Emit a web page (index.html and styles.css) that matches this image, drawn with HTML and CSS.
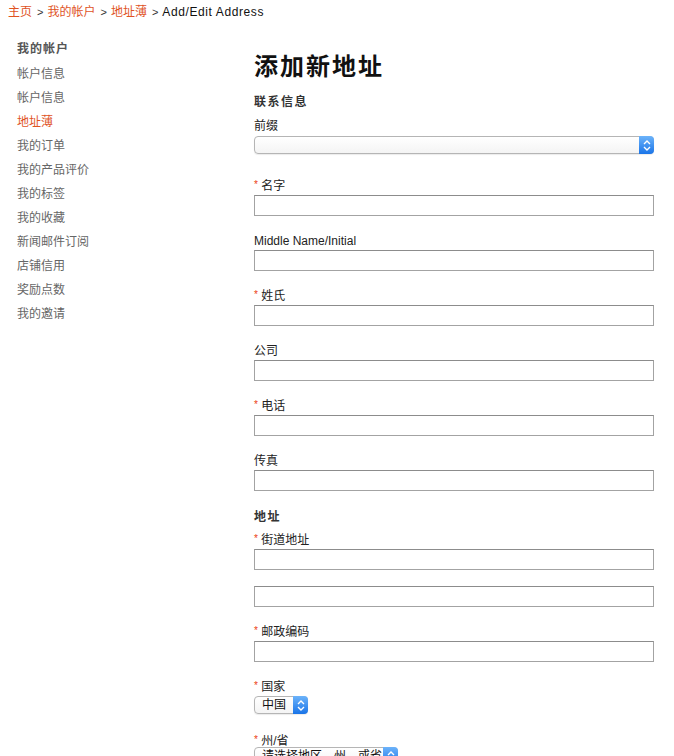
FILE: index.html
```html
<!DOCTYPE html>
<html>
<head>
    <meta charset="UTF-8">
    <link rel="stylesheet" href="styles.css">
</head>
<body>
    <div class="breadcrumbs">
        <a href="#">主页</a><span class="sep">&gt;</span><a href="#">我的帐户</a><span class="sep">&gt;</span><a href="#">地址薄</a><span class="sep">&gt;</span><strong>Add/Edit Address</strong>
    </div>

    <div class="page">
        <div class="sidebar">
            <div class="sidebar-title">我的帐户</div>
            <ul class="nav">
                <li><a href="#">帐户信息</a></li>
                <li><a href="#">帐户信息</a></li>
                <li class="active"><a href="#">地址薄</a></li>
                <li><a href="#">我的订单</a></li>
                <li><a href="#">我的产品评价</a></li>
                <li><a href="#">我的标签</a></li>
                <li><a href="#">我的收藏</a></li>
                <li><a href="#">新闻邮件订阅</a></li>
                <li><a href="#">店铺信用</a></li>
                <li><a href="#">奖励点数</a></li>
                <li><a href="#">我的邀请</a></li>
            </ul>
        </div>

        <div class="main">
            <h1>添加新地址</h1>
            <form action="#" method="post">
                <h2>联系信息</h2>
                <div class="form-group select-group">
                    <label for="prefix" class="first">前缀</label>
                    <div class="select-wrap wide">
                        <select id="prefix" name="prefix"><option></option></select>
                        <span class="select-arrow"><svg width="8" height="11" viewBox="0 0 8 11"><path d="M1 4 L4 1 L7 4 M1 7 L4 10 L7 7" fill="none" stroke="#fff" stroke-width="1.4"/></svg></span>
                    </div>
                </div>
                <div class="form-group">
                    <label for="firstname"><em>*</em> 名字</label>
                    <input type="text" id="firstname" name="firstname">
                </div>
                <div class="form-group">
                    <label for="middlename">Middle Name/Initial</label>
                    <input type="text" id="middlename" name="middlename">
                </div>
                <div class="form-group">
                    <label for="lastname"><em>*</em> 姓氏</label>
                    <input type="text" id="lastname" name="lastname">
                </div>
                <div class="form-group">
                    <label for="company">公司</label>
                    <input type="text" id="company" name="company">
                </div>
                <div class="form-group">
                    <label for="telephone"><em>*</em> 电话</label>
                    <input type="text" id="telephone" name="telephone">
                </div>
                <div class="form-group">
                    <label for="fax">传真</label>
                    <input type="text" id="fax" name="fax">
                </div>

                <h2 class="section">地址</h2>
                <div class="form-group">
                    <label for="street1"><em>*</em> 街道地址</label>
                    <input type="text" id="street1" name="street1">
                    <input type="text" id="street2" name="street2" class="second">
                </div>
                <div class="form-group">
                    <label for="zip"><em>*</em> 邮政编码</label>
                    <input type="text" id="zip" name="zip">
                </div>
                <div class="form-group select-group country-group">
                    <label for="country"><em>*</em> 国家</label>
                    <div class="select-wrap country">
                        <select id="country" name="country"><option>中国</option></select>
                        <span class="select-arrow"><svg width="8" height="11" viewBox="0 0 8 11"><path d="M1 4 L4 1 L7 4 M1 7 L4 10 L7 7" fill="none" stroke="#fff" stroke-width="1.4"/></svg></span>
                    </div>
                </div>
                <div class="form-group select-group region-group">
                    <label for="region"><em>*</em> 州/省</label>
                    <div class="select-wrap region">
                        <select id="region" name="region"><option>请选择地区、州，或省</option></select>
                        <span class="select-arrow"><svg width="8" height="11" viewBox="0 0 8 11"><path d="M1 4 L4 1 L7 4 M1 7 L4 10 L7 7" fill="none" stroke="#fff" stroke-width="1.4"/></svg></span>
                    </div>
                </div>
            </form>
        </div>
    </div>
</body>
</html>
```

FILE: styles.css
```css
* {
    box-sizing: border-box;
}

body {
    margin: 0;
    font-family: "Liberation Sans", "Noto Sans CJK SC", sans-serif;
    font-size: 12px;
    color: #333;
    background-color: #fff;
}

a {
    text-decoration: none;
}

.breadcrumbs {
    padding: 2px 8px 0;
    height: 22px;
    line-height: 20px;
    font-size: 12px;
}

.breadcrumbs a {
    color: #e0531f;
}

.breadcrumbs .sep {
    margin: 0 4px 0 5px;
    color: #333;
    font-size: 11px;
}

.breadcrumbs strong {
    font-weight: normal;
    color: #111;
    letter-spacing: 0.6px;
}

.page {
    display: flex;
    padding-top: 15px;
}

.sidebar {
    width: 254px;
    padding-left: 17px;
}

.sidebar-title {
    height: 25px;
    line-height: 24px;
    font-weight: bold;
    color: #555;
    letter-spacing: 1px;
}

.nav {
    list-style: none;
    margin: 0;
    padding: 0;
}

.nav li {
    height: 24px;
    line-height: 24px;
}

.nav a {
    color: #666;
}

.nav li.active a {
    color: #e0531f;
}

.main {
    width: 400px;
    padding-top: 15px;
}

h1 {
    margin: 0 0 10px;
    height: 30px;
    font-size: 24px;
    line-height: 30px;
    letter-spacing: 2px;
    color: #111;
}

h2 {
    margin: 0 0 4px;
    height: 20px;
    font-size: 12px;
    line-height: 20px;
    letter-spacing: 1.5px;
    color: #333;
}

h2.section {
    margin-top: 16px;
    margin-bottom: 2px;
}

.form-group {
    margin-bottom: 14px;
}

.select-group {
    margin-bottom: 21px;
}

.country-group {
    margin-bottom: 18px;
}

label {
    display: block;
    height: 20px;
    line-height: 22px;
    color: #222;
}

label.first {
    line-height: 20px;
}

.region-group label {
    height: 15px;
    line-height: 18px;
}

label em {
    position: relative;
    top: -2px;
    color: #eb3c10;
    font-style: normal;
    font-size: 10px;
    line-height: 10px;
}

input[type="text"] {
    display: block;
    width: 400px;
    height: 21px;
    margin: 0;
    border: 1px solid #a3a3a3;
    border-top-color: #8c8c8c;
    background: #fff;
    font-size: 12px;
}

input.second {
    margin-top: 16px;
}

.select-wrap {
    position: relative;
    height: 18px;
}

.select-wrap.wide {
    width: 400px;
}

.select-wrap.country {
    width: 54px;
}

.select-wrap.region {
    width: 144px;
}

.select-wrap select {
    -webkit-appearance: none;
    appearance: none;
    display: block;
    width: 100%;
    height: 18px;
    margin: 0;
    padding: 0 0 0 7px;
    border: 1px solid #b5b5b5;
    border-radius: 4px;
    background: linear-gradient(#fff, #f4f4f4);
    font-family: "Liberation Sans", "Noto Sans CJK SC", sans-serif;
    font-size: 12px;
    line-height: 16px;
    color: #111;
    box-shadow: 0 1px 1px rgba(0, 0, 0, 0.08);
}

.select-arrow {
    position: absolute;
    right: 0;
    top: 0;
    width: 15px;
    height: 18px;
    display: flex;
    align-items: center;
    justify-content: center;
    border-radius: 0 4px 4px 0;
    background: linear-gradient(#6cb3fa, #1a74e8);
    pointer-events: none;
}
```
